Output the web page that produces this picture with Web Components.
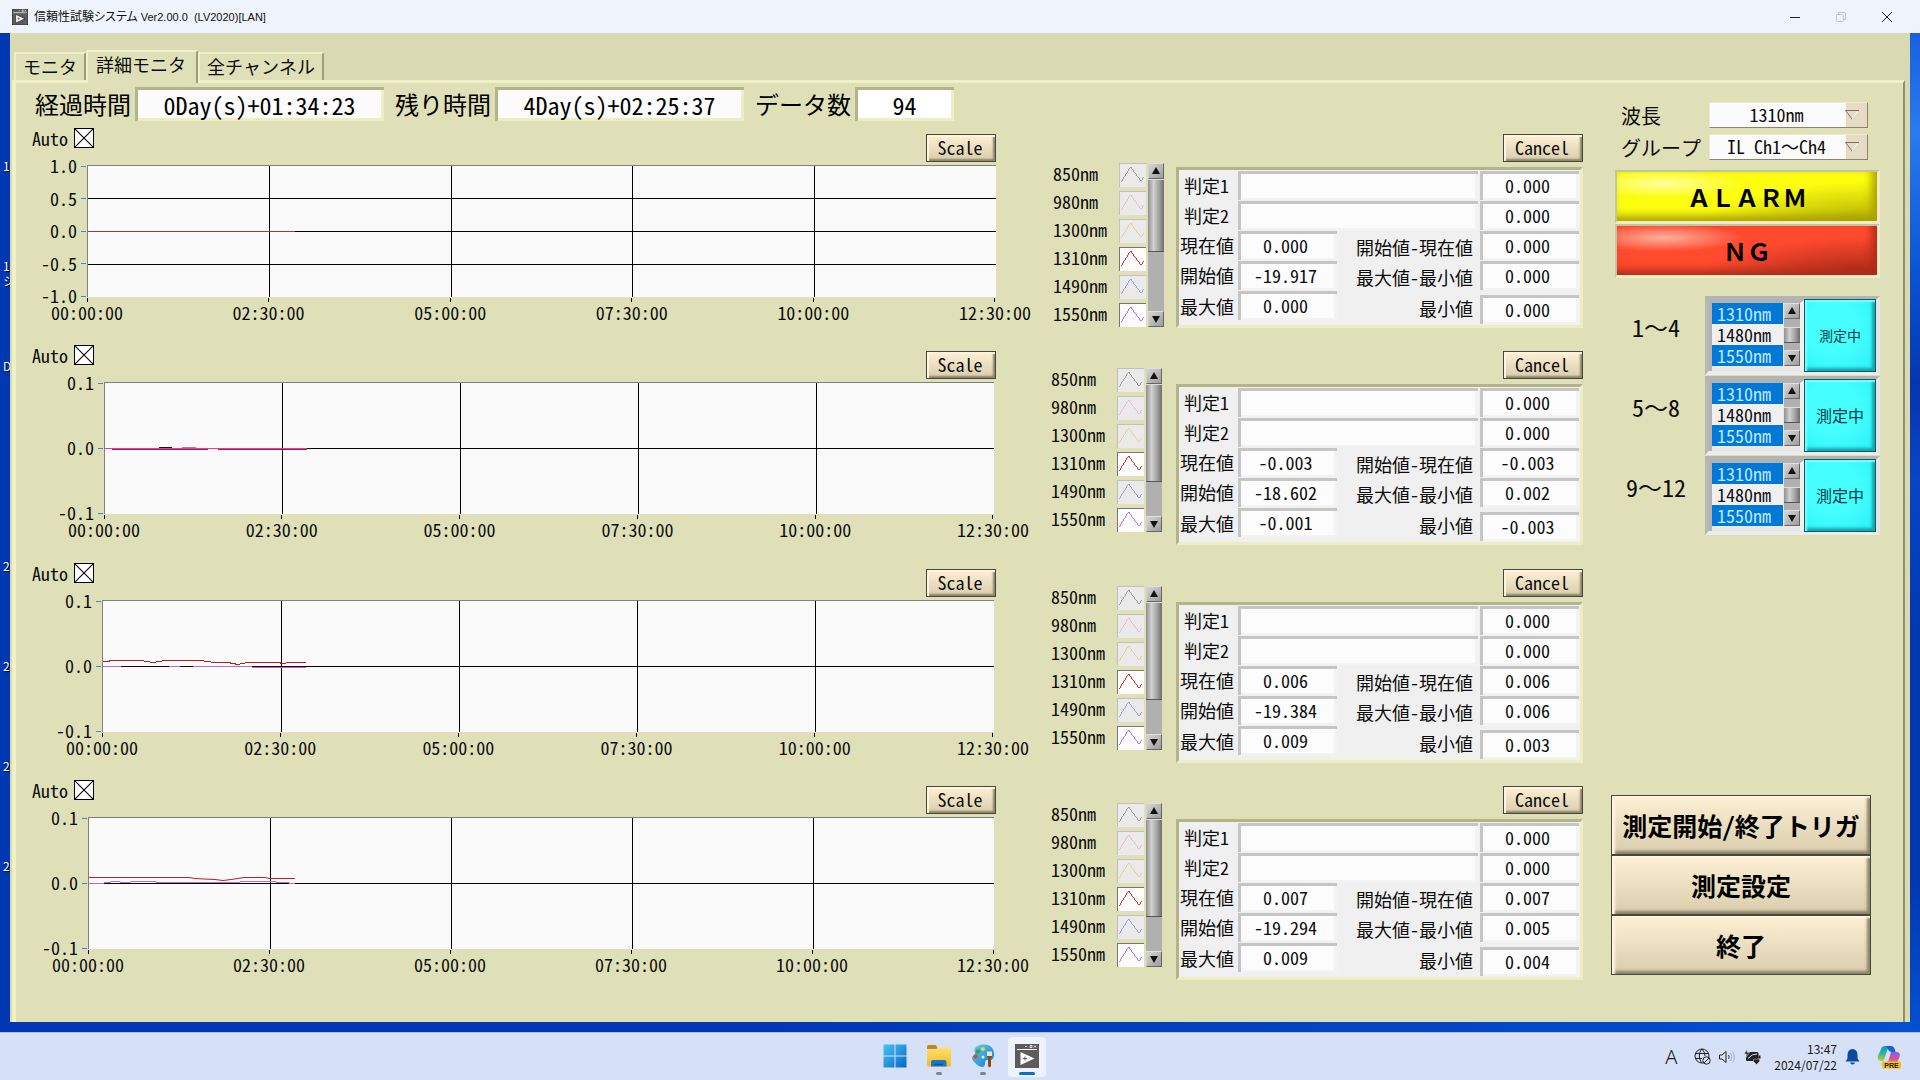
<!DOCTYPE html>
<html lang="ja">
<head>
<meta charset="utf-8">
<title>信頼性試験システム</title>
<style>
  html, body { margin: 0; height: 100%; }
  body {
    font-family: "Noto Sans Mono CJK JP", "Noto Sans CJK JP", "Liberation Mono", monospace;
    font-size: 18px; line-height: 20px; color: #0c0c0c; overflow: hidden;
    --khaki: #dfe0b8; --khaki-light: #f0f1c8; --khaki-dark: #b3b48a;
    --ui: "Noto Sans CJK JP", sans-serif;
  }
</style>
</head>
<body>
<desk-top></desk-top>
<script>
const reset = `
  *, *::before, *::after { box-sizing: border-box; }
  button, input, select { font: inherit; color: inherit; margin: 0; padding: 0; border: 0; border-radius: 0; background: none; outline: 0; }
  svg { display: block; }
`;

class UiElement extends HTMLElement {
  constructor() { super(); this.attachShadow({ mode: "open" }); }
  connectedCallback() {
    this.shadowRoot.innerHTML = `<style>${reset}${this.styles()}</style>${this.markup()}`;
  }
  attr(name, fallback = "") { return this.getAttribute(name) ?? fallback; }
  styles() { return ""; }
  markup() { return "<slot></slot>"; }
}

/* Raised beige push button */
class PushButton extends UiElement {
  styles() { return `
    :host { display: block; width: 70px; height: 28px; }
    :host([size="wide"]) { width: 80px; }
    :host([size="large"]) { width: auto; height: 60px; font-size: 25px; font-weight: 700; color: #000; }
    button {
      display: flex; align-items: center; justify-content: center; width: 100%; height: 100%; padding: 0 2px 2px 0;
      border: 1px solid #4a463c; background: linear-gradient(#fdf0d4, #d9cdad);
      box-shadow: inset 2px 2px 1px #fff5de, inset -2px -2px 2px #8b836a;
    }
    :host([size="large"]) button { padding: 0; box-shadow: inset 3px 2px 2px #fff5de, inset -3px -3px 3px #8b836a; white-space: nowrap; }`; }
  markup() { return `<button type="button"><slot></slot></button>`; }
}

/* Sunken read-only value with a caption */
class ReadoutField extends UiElement {
  styles() { return `
    :host { display: flex; align-items: center; gap: 4px; font-size: 24px; line-height: 28px; color: #000; }
    label { font-weight: 500; white-space: nowrap; }
    input { width: 249px; height: 34px; text-align: center; background: #fbfbfb; box-shadow: inset 3px 3px var(--khaki-dark), inset -3px -3px #edeec4; }
    :host([short]) input { width: 99px; background: #fff; }`; }
  markup() { return `<label for="v">${this.attr("label")}</label><input id="v" readonly value="${this.attr("value")}">`; }
}

class TabStrip extends UiElement {
  styles() { return `
    :host { display: flex; align-items: flex-end; height: 33px; padding-left: 4px; margin-bottom: -3px; position: relative; z-index: 1; }
    button { height: 28px; margin-bottom: 3px; padding: 0 7px 2px; background: var(--khaki); white-space: nowrap; line-height: 20px;
      border: solid; border-width: 2px 2px 0 2px; border-color: var(--khaki-light) #9d9e7a var(--khaki) var(--khaki-light); border-radius: 2px 2px 0 0; }
    button[aria-selected="true"] { height: 33px; margin-bottom: 0; padding: 0 10px 8px 8px; }`; }
  markup() {
    return this.attr("tabs").split(",").map(t =>
      `<button type="button" role="tab" aria-selected="${t === this.attr("selected")}">${t}</button>`).join("");
  }
}

/* Metallic scroll rail with arrow buttons */
class ScrollRail extends UiElement {
  styles() { return `
    :host { display: flex; flex-direction: column; width: 16px; background: #b0b0b0; }
    button { height: 16px; flex: none; display: grid; place-items: center; background: linear-gradient(135deg, #d6d6d6, #9c9c9c);
      border: 1px solid; border-color: #e0e0e0 #666 #666 #d0d0d0; }
    .space { flex: 1; padding-top: ${this.attr("offset", "0")}px; }
    .thumb { height: ${this.attr("thumb", "40")}px; background: linear-gradient(90deg, #8f8f8f, #d2d2d2 35%, #a8a8a8 65%, #6e6e6e);
      border-top: 1px solid #dcdcdc; border-bottom: 1px solid #555; }`; }
  markup() { return `
    <button type="button" aria-label="up"><svg width="8" height="8"><path d="M4 0 8 7H0z" fill="#111"/></svg></button>
    <div class="space"><div class="thumb"></div></div>
    <button type="button" aria-label="down"><svg width="8" height="8"><path d="M0 1H8L4 8z" fill="#111"/></svg></button>`; }
}

/* Trend graph: Auto box, Scale button, axes, grid and series */
class TrendChart extends UiElement {
  styles() { return `
    :host { display: flex; flex-direction: column; }
    header { display: flex; justify-content: space-between; height: 37px; }
    label { display: flex; gap: 6px; height: 20px; align-items: center; line-height: 20px; }
    input { appearance: none; width: 20px; height: 20px; border: 1px solid #000; background:
      linear-gradient(to top right, transparent calc(50% - 1px), #111 50%, transparent calc(50% + 1px)),
      linear-gradient(to bottom right, transparent calc(50% - 1px), #111 50%, transparent calc(50% + 1px)), #fff; }
    push-button { margin-top: 6px; }
    .area { display: flex; padding-right: ${this.attr("inset", "0")}px; }
    .y { width: ${this.attr("gutter")}px; height: 132px; padding: 1px 0; display: flex; flex-direction: column; justify-content: space-between; line-height: 16px; }
    .y span { height: 0; display: flex; align-items: center; justify-content: flex-end; gap: 4px; }
    .y b { font-weight: 400; padding-bottom: 2px; }
    .y span::after { content: ""; width: 5px; height: 1px; background: #2f8fd0; margin-right: 1px; }
    .plot { flex: 1; min-width: 0; }
    svg { width: 100%; height: 132px; background: #fafafa; border: solid #808080; border-width: 1px 0 0 1px; }
    path { vector-effect: non-scaling-stroke; fill: none; stroke-width: 1; shape-rendering: crispEdges; }
    .x { display: flex; justify-content: space-between; padding-top: 1px; margin-right: 1px; }
    .x span { width: 0; display: flex; flex-direction: column; align-items: center; gap: 2px; line-height: 16px; }
    .x span::before { content: ""; width: 1px; height: 4px; flex: none; background: #000; }`; }
  markup() {
    const ys = this.attr("y").split(",");
    const xs = ["00:00:00", "02:30:00", "05:00:00", "07:30:00", "10:00:00", "12:30:00"];
    const n = ys.length - 1;
    let grid = "";
    for (let i = 1; i < n; i++) grid += `M0 ${i * 132 / n}H750`;
    for (let i = 1; i < 5; i++) grid += `M${i * 150} 0V132`;
    const series = this.attr("series").split("|").map(s => {
      const [color, d] = s.split(":");
      return `<path d="${d}" stroke="${color}" transform="translate(0 66) scale(${this.attr("unit")} 1)"/>`;
    }).join("");
    return `
      <header><label><span>Auto</span><input type="checkbox" checked></label><push-button>Scale</push-button></header>
      <div class="area">
        <div class="y">${ys.map(v => `<span><b>${v}</b></span>`).join("")}</div>
        <div class="plot">
          <svg viewBox="0 0 750 132" preserveAspectRatio="none"><path d="${grid}" stroke="#000"/>${series}</svg>
          <div class="x">${xs.map(v => `<span>${v}</span>`).join("")}</div>
        </div>
      </div>`;
  }
}

class PlotLegend extends UiElement {
  styles() { return `
    :host { display: flex; width: 111px; height: 164px; gap: 2px; }
    ul { flex: 1; margin: 0; padding: 0; list-style: none; display: flex; flex-direction: column; gap: 4px; }
    li { display: flex; justify-content: space-between; height: 24px; line-height: 20px; }
    svg { background: #eaeaea; border: solid #c0c0c0; border-width: 1px 0 0 1px; shape-rendering: crispEdges; }
    .on svg { background: #fdfdfd; border-color: #777; }`; }
  markup() {
    const items = [["850nm", "#999"], ["980nm", "#eeb4dc"], ["1300nm", "#e8d08a"], ["1310nm", "#d02020", 1], ["1490nm", "#8fa0e0"], ["1550nm", "#b860e0", 1]];
    return `<ul>${items.map(([t, c, on]) => `<li class="${on ? "on" : ""}"><span>${t}</span>
      <svg width="27" height="24" viewBox="0 0 27 24"><path d="M1 19 11 3 22 18 24.500 14" fill="none" stroke="${c}"/></svg></li>`).join("")}</ul>
      <scroll-rail thumb="${this.attr("thumb")}"></scroll-rail>`;
  }
}

/* Judgement and value table of one channel */
class StatPanel extends UiElement {
  styles() { return `
    :host { display: flex; flex-direction: column; width: 407px; }
    push-button { align-self: flex-end; margin: 6px 0 5px; }
    .box { border: 3px solid; border-color: var(--khaki-dark) #edeec4 #edeec4 var(--khaki-dark); background: #f0f0f0;
      display: grid; grid-template-columns: 59px 99px 143px 99px; grid-template-rows: repeat(4, 30px) 33px; padding: 1px 0; line-height: 20px; }
    label { align-self: center; white-space: nowrap; padding: 0 0 3px 1px; }
    .judge { padding-left: 5px; }
    .right { text-align: right; padding: 2px 7px 0 0; }
    .bottom { align-self: end; padding-bottom: 6px; }
    input { width: 100%; height: 29px; text-align: center; padding: 0 4px 2px 0; background: #fcfcfc; box-shadow: inset 3px 3px #c5c5c5, inset -3px -2px #f3f3f3; }
    .long { grid-column: 2 / 4; width: 240px; }
    input.bottom { padding-bottom: 2px; }`; }
  markup() {
    const [now, start, max, dStart, dRange, min] = this.attr("values").split(",");
    const f = (id, v, c = "") => `<input id="${id}" class="${c}" readonly value="${v}">`;
    return `<push-button size="wide">Cancel</push-button>
    <div class="box">
      <label class="judge" for="j1">判定1</label>${f("j1", "", "long")}<input readonly value="0.000" aria-label="判定1">
      <label class="judge" for="j2">判定2</label>${f("j2", "", "long")}<input readonly value="0.000" aria-label="判定2">
      <label for="a">現在値</label>${f("a", now)}<label class="right" for="d">開始値-現在値</label>${f("d", dStart)}
      <label for="b">開始値</label>${f("b", start)}<label class="right" for="e">最大値-最小値</label>${f("e", dRange)}
      <label for="c">最大値</label>${f("c", max)}<label class="right bottom" for="g">最小値</label>${f("g", min, "bottom")}
    </div>`;
  }
}

class MonitorRow extends UiElement {
  styles() { return `
    :host { display: flex; align-items: flex-start; }
    trend-chart { flex: 1; min-width: 0; }
    plot-legend { margin: 23px 14px 0 55px; }
    :host([first]) plot-legend { margin: 35px 12px 0 57px; }`; }
  markup() { return `
    <trend-chart y="${this.attr("y")}" gutter="${this.attr("gutter")}" inset="${this.attr("inset", "0")}" unit="${this.attr("unit")}" series="${this.attr("series")}"></trend-chart>
    <plot-legend thumb="${this.attr("thumb", "98")}"></plot-legend>
    <stat-panel values="${this.attr("values")}"></stat-panel>`; }
}

class PickBox extends UiElement {
  styles() { return `
    :host { display: flex; justify-content: space-between; align-items: center; height: 26px; padding: 0 12px 0 10px; }
    label { font-size: 20px; font-weight: 500; padding-top: 2px; }
    .wrap { display: grid; width: 159px; height: 26px; grid-template-columns: 1fr 22px; align-items: center;
      background: linear-gradient(90deg, #fbfbfb 136px, #e6dcc6 136px); border: 1px solid; border-color: #f3e7cc #8b836a #8b836a #f3e7cc; }
    select { grid-area: 1 / 1 / 2 / 3; width: 100%; height: 24px; appearance: none; text-align-last: center; padding: 0 24px 2px 0; }
    svg { grid-area: 1 / 2; pointer-events: none; }`; }
  markup() { return `<label for="s">${this.attr("label")}</label>
    <span class="wrap"><select id="s"><option>${this.attr("value")}</option></select>
    <svg width="15" height="10"><path d="M0 .5H14" stroke="#7d7260"/><path d="M1 1 7 9" stroke="#7d7260"/><path d="M13 1 7 9" stroke="#fffaf0"/></svg></span>`; }
}

class LampBar extends UiElement {
  styles() { return `
    :host { display: block; height: 54px; margin-left: 4px; font-size: 24px; line-height: 28px; font-weight: 700; color: #000;
      border: 2px solid; border-color: #c4c59c #f2eac8 #f2eac8 #c4c59c; border-width: 2px 3px 3px 2px; }
    div { height: 100%; display: grid; place-items: center; }
    :host([tone="yellow"]) div { box-shadow: inset -5px -5px 9px #a8a000; background: radial-gradient(ellipse 80px 14px at 18% 24%, #ffff9c, #ffff3000), radial-gradient(ellipse 70% 100% at 100% 120%, #a09c00, #f8f80000), #fdfd10; }
    :host([tone="red"]) div { box-shadow: inset -5px -5px 9px #b02c18; background: radial-gradient(ellipse 80px 14px at 18% 24%, #ffb09c, #ff583800), radial-gradient(ellipse 70% 100% at 100% 120%, #8c2010, #ff482c00), #ff4a2e; }`; }
  markup() { return `<div><slot></slot></div>`; }
}

class RangeStatus extends UiElement {
  styles() { return `
    :host { display: flex; align-items: center; height: 80px; }
    .name { flex: 1; text-align: center; font-size: 24px; line-height: 28px; padding: 0 4px 16px 0; font-weight: 500; }
    .frame { display: flex; width: 175px; height: 79px; border: 4px solid; border-color: #b4b4b4 #e6e6e6 #ececec #b8b8b8; background: #e8e8e8; }
    .list { display: flex; flex: 1; gap: 1px; padding: 0 0 2px; border: 3px solid; border-color: #b2b2b2 #f0f0f0 #f0f0f0 #b2b2b2; border-width: 3px 4px 0 3px; }
    select { flex: 1; min-width: 0; height: 63px; overflow: hidden; scrollbar-width: none; background: #f0f0f0; }
    select::-webkit-scrollbar { display: none; }
    option { padding: 0 0 0 5px; height: 21px; min-height: 0; display: flex; align-items: center; color: #111; }
    option:checked { background: #0078d7 linear-gradient(#0078d7, #0078d7); -webkit-text-fill-color: #bfe8ff; }
    scroll-rail { height: 63px; }
    button { width: 72px; height: 73px; margin-top: -1px; background: radial-gradient(ellipse at 40% 40%, #45ffff 40%, #2aeef8); border: 1px solid #135a5e;
      box-shadow: inset 2px 2px 2px #7affff, inset -3px -3px 3px #12a6b0; font-size: 16px; color: #053c46; white-space: nowrap; }
    :host([small]) button { font-size: 14px; }`; }
  markup() { return `<label class="name" for="l">${this.attr("name")}</label>
    <div class="frame"><div class="list">
      <select id="l" multiple size="3"><option selected>1310nm</option><option>1480nm</option><option selected>1550nm</option></select>
      <scroll-rail offset="8" thumb="16"></scroll-rail></div>
      <button type="button">測定中</button></div>`; }
}

const labviewIcon = size => `<svg width="${size}" height="${size}" viewBox="0 0 24 24"><path d="M0 0H24V24H0z" fill="#5c5c5c"/><path d="M2 5.500H22" stroke="#fff"/><path d="M10 2.500h2M15 1.500h2v2h-2zM19 1.500l2 2m0-2l-2 2" stroke="#fff" stroke-width=".8" fill="none"/><path d="M5.500 8 19.500 14.500 5.500 21z" fill="#fff"/><path d="M8 14.500h4M10 12.500v4" stroke="#5c5c5c"/></svg>`;

class TitleBar extends UiElement {
  styles() { return `
    :host { display: flex; align-items: center; height: 33px; padding: 0 10px 0 12px; gap: 6px; background: #eff3fb; font: 12px/16px "Liberation Sans", var(--ui); color: #111; }
    h1 { font: inherit; margin: 0; flex: 1; white-space: pre; font-feature-settings: "palt"; }
    h1 span { font-size: 11px; }
    .controls { display: flex; }
    button { width: 46px; height: 33px; display: grid; place-items: center; }
    svg { fill: none; stroke: #222; }
    button:nth-of-type(2) svg { stroke: #c0c4cc; }`; }
  markup() { return `${labviewIcon(16)}<h1>信頼性試験システム<span> Ver2.00.0  (LV2020)[LAN]</span></h1>
    <div class="controls">
    <button type="button" aria-label="minimize"><svg width="12" height="12"><path d="M1 6.500H11"/></svg></button>
    <button type="button" aria-label="restore"><svg width="12" height="12"><rect x="1.500" y="3.500" width="7" height="7" rx="1"/><path d="M3.500 3V1.500H9A1.500 1.500 0 0 1 10.500 3V8.500H9"/></svg></button>
    <button type="button" aria-label="close"><svg width="12" height="12"><path d="M1 1 11 11M11 1 1 11"/></svg></button>
    </div>`; }
}

class AppPanel extends UiElement {
  styles() { return `
    :host { display: flex; flex-direction: column; padding-top: 17px; background: #d9dab4; min-height: 0; }
    main { flex: 1; display: grid; grid-template-columns: minmax(0, 1fr) 269px; gap: 28px; margin: 0 5px 0 2px; padding-right: 23px;
      background: var(--khaki); border: solid; border-width: 3px 2px 0 4px; border-color: #f0f1c8 #8f9070 #000 #f0f1c8; }
    .readouts { display: flex; gap: 11px; padding: 4px 0 7px 19px; }
    .rows { display: grid; grid-template-rows: 217px 218px 217px auto; padding-left: 16px; }
    aside { display: flex; flex-direction: column; padding: 19px 0 47px; }
    pick-box + pick-box { margin-top: 6px; }
    .lamps { margin: 10px 0 17px; }
    .actions { margin: auto 9px 0 0; }`; }
  markup() { return `
    <tab-strip tabs="モニタ,詳細モニタ,全チャンネル" selected="詳細モニタ"></tab-strip>
    <main>
      <section>
        <div class="readouts">
          <readout-field label="経過時間" value="0Day(s)+01:34:23"></readout-field>
          <readout-field label="残り時間" value="4Day(s)+02:25:37"></readout-field>
          <readout-field label="データ数" value="94" short></readout-field>
        </div>
        <div class="rows">
          <monitor-row first y="1.0,0.5,0.0,-0.5,-1.0" gutter="55" thumb="73" values="0.000,-19.917,0.000,0.000,0.000,0.000"
            unit=".825" series="#b83030:M0 0H207"></monitor-row>
          <monitor-row y="0.1,0.0,-0.1" gutter="72" inset="2" values="-0.003,-18.602,-0.001,-0.003,0.002,-0.003"
            unit=".844" series="#f03c90:M0 0H202|#a01850:M7 1H103M113 1H202|#b868c8:M77 -1H91|#201010:M54 -1H67"></monitor-row>
          <monitor-row y="0.1,0.0,-0.1" gutter="70" inset="2" values="0.006,-19.384,0.009,0.006,0.006,0.003"
            unit=".842" series="#b070d0:M0 0H149V1H203|#140818:M18 0H66M77 0H90M149 0H203|#b02020:M0 -5H6V-6H38L50 -4L62 -6H98L112 -4H125L135 -2L144 -4H175L180 -3L185 -4H203"></monitor-row>
          <monitor-row y="0.1,0.0,-0.1" gutter="56" inset="2" values="0.007,-19.294,0.009,0.007,0.005,0.004"
            unit=".829" series="#b070d0:M0 0H15V-1H22V-2H31V-1H42V-2H67V-1H151V-2H187V-1H200V0H206|#b02020:M0 -6H100L106 -5L126 -4L134 -3L142 -4L155 -6H176L181 -5H206"></monitor-row>
        </div>
      </section>
      <aside>
        <pick-box label="波長" value="1310nm"></pick-box>
        <pick-box label="グループ" value="IL Ch1～Ch4"></pick-box>
        <div class="lamps"><lamp-bar tone="yellow">ＡＬＡＲＭ</lamp-bar><lamp-bar tone="red">ＮＧ</lamp-bar></div>
        <range-status name="1～4" small></range-status>
        <range-status name="5～8"></range-status>
        <range-status name="9～12"></range-status>
        <div class="actions">
          <push-button size="large">測定開始/終了トリガ</push-button>
          <push-button size="large">測定設定</push-button>
          <push-button size="large">終了</push-button>
        </div>
      </aside>
    </main>`; }
}

class TaskBar extends UiElement {
  styles() { return `
    :host { display: grid; grid-template-columns: 1fr auto 1fr; height: 48px; background: #d6e0f7; border-top: 1px solid #b3bfe8; font: 12px/16px var(--ui); color: #1a1a1a; }
    nav { grid-column: 2; display: flex; gap: 6px; align-items: center; padding-left: 2px; }
    button { width: 38px; height: 40px; padding-top: 7px; display: flex; flex-direction: column; align-items: center; gap: 4px; border-radius: 4px; }
    button::after { content: ""; width: 6px; height: 3px; border-radius: 2px; background: #80858f; }
    button:first-child::after { background: none; }
    button:last-child { background: #eef2fc; }
    button:last-child::after { width: 16px; background: #0a6cc8; }
    .tray { display: flex; align-items: center; justify-content: flex-end; gap: 8px; padding-right: 19px; }
    .ime { font: 300 20px/20px "Noto Sans", sans-serif; margin-right: 9px; }
    time { text-align: right; margin-left: 5px; white-space: nowrap; }
    .pre { margin-left: 9px; }`; }
  markup() { return `
    <nav>
      <button type="button" aria-label="start"><svg width="24" height="24" viewBox="0 0 24 24"><defs><linearGradient id="w" x1="0" y1="0" x2="1" y2="1"><stop stop-color="#4cc4f4"/><stop offset="1" stop-color="#0468c4"/></linearGradient></defs><path d="M.5 .5H11.500V11.500H.5zM12.500 .5H23.500V11.500H12.500zM.5 12.500H11.500V23.500H.5zM12.500 12.500H23.500V23.500H12.500z" fill="url(#w)"/></svg></button>
      <button type="button" aria-label="explorer"><svg width="24" height="24" viewBox="0 0 24 24"><defs><linearGradient id="f" x1="0" y1="0" x2="0" y2="1"><stop stop-color="#ffdf6a"/><stop offset="1" stop-color="#f5b92c"/></linearGradient></defs><path d="M0 2.500Q0 1 1.500 1H8Q9 1 9.500 2L11 5H0z" fill="#c8860c"/><path d="M0 5.500Q0 6 4 6H8L11 3.500H22.500Q24 3.500 24 5V21Q24 22.500 22.500 22.500H1.500Q0 22.500 0 21z" fill="url(#f)"/><path d="M4 22.500V18Q4 16 6 16H17.500Q19.500 16 19.500 18V22.500z" fill="#1878c8"/><path d="M7.500 20.500H16" stroke="#0a4f96" stroke-width="1.500"/></svg></button>
      <button type="button" aria-label="paint"><svg width="24" height="24" viewBox="0 0 24 24"><defs><linearGradient id="p" x1="0" y1="0" x2="1" y2="1"><stop stop-color="#58d0f4"/><stop offset="1" stop-color="#1478c8"/></linearGradient></defs><path d="M13 .5C20 .5 23.500 5 23 11C22.500 17 19 16 16 16C13 16.500 15 20 13 22.500C10 24.500 4 20 1 15Q.5 12 3 12C6 11 2 7 4 4Q7 .5 13 .5z" fill="url(#p)"/><circle cx="12" cy="5" r="2" fill="#f4d030"/><circle cx="7" cy="7.500" r="2.200" fill="#38a048"/><circle cx="4.500" cy="12.500" r="2.200" fill="#d84838"/><circle cx="12" cy="13" r="1.500" fill="#e8f6ff"/><path d="M16 8H21V12Q21 13 20 13.500V22Q18.500 24.500 17 22V13.500Q16 13 16 12z" fill="#8a4a1c"/><path d="M16 7.500H21V12H16z" fill="#f0e4cc"/></svg></button>
      <button type="button" aria-label="LabVIEW">${labviewIcon(24)}</button>
    </nav>
    <div class="tray">
      <span class="ime">A</span>
      <svg width="17" height="17" viewBox="0 0 17 17" fill="none" stroke="#222"><circle cx="8" cy="8" r="7"/><path d="M1 5.500H15M1 10.500H8M8 1C4.500 4.500 4.500 11.500 8 15M8 1Q11 4 11 8"/><circle cx="12.500" cy="12.500" r="3.700" fill="#d6e0f7"/><path d="M10 15 15 10"/></svg>
      <svg width="17" height="16" viewBox="0 0 17 16" fill="none" stroke="#222"><path d="M.5 6H3L7 2.500V13.500L3 10H.5z"/><path d="M9.500 6Q11 8 9.500 10" stroke="#444"/><path d="M11.500 4Q14.500 8 11.500 12M13.500 2.500Q17.500 8 13.500 13.500" stroke="#a8b0c4"/></svg>
      <svg width="17" height="16" viewBox="0 0 17 16"><path d="M3 3H13Q14.500 3 14.500 4.500V12H3.500Q2 12 2 10.500V7z" fill="#222"/><path d="M14.500 6.500H16.500V9.500H14.500z" fill="#222"/><path d="M3.500 0 0 5H2.500L1.500 9 5.500 3.500H3z" fill="#222" stroke="#d6e0f7" stroke-width=".6"/><path d="M4 9.500Q8 4.500 13 5" stroke="#d6e0f7" fill="none"/><path d="M12.500 15.500 9.500 12.500Q9 9.800 11 9.800 12 9.800 12.500 10.800 13 9.800 14 9.800 16.500 10 15.500 12.500z" fill="#222" stroke="#d6e0f7" stroke-width=".5"/></svg>
      <time>13:47<br>2024/07/22</time>
      <svg width="15" height="16" viewBox="0 0 15 16" fill="#0b4a9c"><path d="M7.500 0Q12.500 .5 12.500 6V9.500L14.500 12.500H.5L2.500 9.500V6Q2.500 .5 7.500 0zM5 13.500H10Q9.500 15.500 7.500 15.500T5 13.500z"/></svg>
      <svg class="pre" width="24" height="24" viewBox="0 0 24 24"><defs><linearGradient id="c1" x1="0" y1="0" x2="0" y2="1"><stop stop-color="#1590d8"/><stop offset=".5" stop-color="#30b890"/><stop offset="1" stop-color="#c8d030"/></linearGradient><linearGradient id="c2" x1="0" y1="0" x2="0" y2="1"><stop stop-color="#8060e8"/><stop offset=".6" stop-color="#e05090"/><stop offset="1" stop-color="#f49060"/></linearGradient></defs><path d="M8 1H15Q11 2 10 6L7 15Q6 17 3 16Q0 15 1 11L4 4Q5 1 8 1z" fill="url(#c1)"/><path d="M9 1H14Q17 1 18 5L18.500 7H15Q12 7 11 4Q10 2 9 1z" fill="#1464d0"/><path d="M14 7H19Q24 7 22.500 12L20.500 17Q19.500 19 16 19H8Q11 18 12 14z" fill="url(#c2)"/><rect x="5" y="16.500" width="19" height="7" rx="1.500" fill="#f8c010"/><text x="14.500" y="22.500" font-family="Liberation Sans, sans-serif" font-size="7" font-weight="700" text-anchor="middle" fill="#222">PRE</text></svg>
    </div>`; }
}

class DeskTop extends UiElement {
  styles() { return `
    :host { display: grid; grid-template-rows: 33px minmax(0, 1fr) 48px; height: 100vh; background: #0038b4; }
    .work { display: grid; grid-template-columns: 10px minmax(0, 1fr) 10px; grid-template-rows: minmax(0, 1fr) 10px; background: linear-gradient(90deg, #0038b4 40%, #0450d0); }
    .icons { padding: 125px 0 0 3px; overflow: hidden; font: 12px/15px var(--ui); color: #fff; text-shadow: 1px 1px 1px #000; }
    .icons span { display: block; height: 100px; white-space: pre; }
    .edge { grid-column: 3; grid-row: 1 / 3; background: linear-gradient(#1a5fe0, #2a7aec 10%, #0a50d0 25%, #0436ae 35%, #0a44c4 45%, #0038b0 60%, #0038b0 85%, #0450d0); }
    app-panel { grid-column: 2; grid-row: 1; }`; }
  markup() { return `
    <title-bar></title-bar>
    <div class="work">
      <div class="icons"><span>1</span><span>1
シ</span><span>D</span><span></span><span>2</span><span>2</span><span>2</span><span>2</span></div>
      <app-panel></app-panel>
      <div class="edge"></div>
    </div>
    <task-bar></task-bar>`; }
}

for (const [name, cls] of Object.entries({
  "push-button": PushButton, "readout-field": ReadoutField, "tab-strip": TabStrip, "scroll-rail": ScrollRail,
  "trend-chart": TrendChart, "plot-legend": PlotLegend, "stat-panel": StatPanel, "monitor-row": MonitorRow,
  "pick-box": PickBox, "lamp-bar": LampBar, "range-status": RangeStatus, "title-bar": TitleBar,
  "app-panel": AppPanel, "task-bar": TaskBar, "desk-top": DeskTop
})) customElements.define(name, cls);
</script>
</body>
</html>
